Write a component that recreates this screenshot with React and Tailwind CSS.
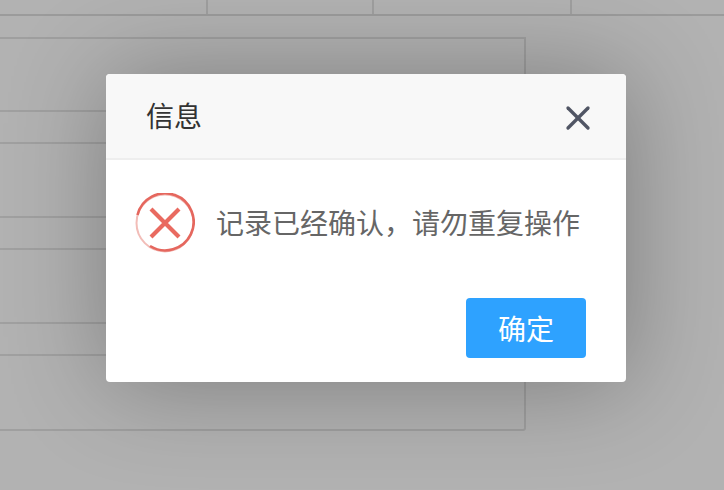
import React from 'react';
import { X } from 'lucide-react';

const rows = ['h-[73px]', 'h-[32px]', 'h-[74px]', 'h-[32px]', 'h-[74px]', 'h-[32px]'];

function ErrorIcon() {
  return (
    <svg width="60" height="60" viewBox="0 0 60 60" fill="none" className="flex-shrink-0">
      <circle cx="30" cy="30" r="28.5" stroke="#f2bdb8" strokeWidth="2" />
      <path d="M15 53 A28.5 28.5 0 1 0 2.5 22" stroke="#e5675e" strokeWidth="2.6" />
      <path d="M16 16 L44 44 M44 16 L16 44" stroke="#e96a60" strokeWidth="4.2" />
    </svg>
  );
}

function App() {
  return (
    <div className="relative h-[490px] w-[724px] overflow-hidden bg-white font-['Noto_Sans_CJK_SC',sans-serif]">

      {/* page behind the dialog */}
      <div className="flex h-[16px] border-b-2 border-[#dfdfdf]">
        <div className="w-[208px] border-r-2 border-[#e4e4e4]" />
        <div className="w-[166px] border-r-2 border-[#e4e4e4]" />
        <div className="w-[198px] border-r-2 border-[#e4e4e4]" />
      </div>
      <div className="mt-[21px] h-[394px] w-[526px] rounded-br-[3px] border-t-2 border-r-2 border-b-2 border-[#e4e4e4]">
        {rows.map((h, i) => (
          <div key={i} className={`${h} border-b-2 border-[#e6e6e6]`} />
        ))}
      </div>

      {/* overlay + dialog */}
      <div className="absolute inset-0 bg-black/30 pl-[106px] pt-[74px]">
        <div className="flex h-[308px] w-[520px] flex-col rounded-[4px] bg-white shadow-[2px_2px_100px_rgba(0,0,0,0.3)]">
          <div className="flex h-[86px] items-center justify-between rounded-t-[4px] border-b-2 border-[#eeeeee] bg-[#f8f8f8] pl-[40px] pr-[28px]">
            <span className="-mt-[2px] text-[28px] leading-none text-[#333333]">信息</span>
            <X size={40} strokeWidth={2} className="mt-[4px] text-[#505564]" />
          </div>
          <div className="flex items-center gap-[21px] pl-[29px] pt-[33px]">
            <ErrorIcon />
            <span className="-mt-[2px] text-[28px] leading-none text-[#666666]">记录已经确认，请勿重复操作</span>
          </div>
          <div className="mt-auto flex justify-end pb-[24px] pr-[40px]">
            <button className="h-[60px] w-[120px] rounded-[4px] bg-[#2ea2ff] text-[28px] leading-none text-white">确定</button>
          </div>
        </div>
      </div>
    </div>
  );
}

export default App;
